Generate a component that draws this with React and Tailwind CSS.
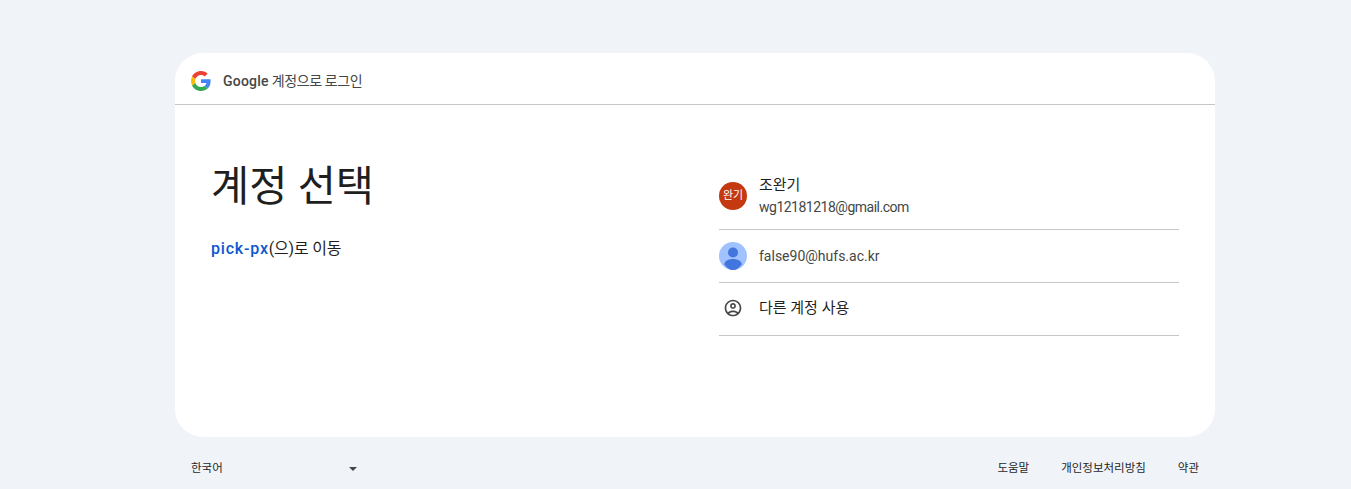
const font = "[font-family:Roboto,'Noto_Sans_CJK_KR',sans-serif]";

const GoogleLogo = () => (
  <svg viewBox="0 0 48 48" className="w-5 h-5 shrink-0 mt-[5px]">
    <path fill="#EA4335" d="M24 9.5c3.54 0 6.71 1.22 9.21 3.6l6.85-6.85C35.9 2.38 30.47 0 24 0 14.62 0 6.51 5.38 2.56 13.22l7.98 6.19C12.43 13.72 17.74 9.5 24 9.5z" />
    <path fill="#4285F4" d="M46.98 24.55c0-1.57-.15-3.09-.38-4.55H24v9.02h12.94c-.58 2.96-2.26 5.48-4.78 7.18l7.73 6c4.51-4.18 7.09-10.36 7.09-17.65z" />
    <path fill="#FBBC05" d="M10.53 28.59c-.48-1.45-.76-2.99-.76-4.59s.27-3.14.76-4.59l-7.98-6.19C.92 16.46 0 20.12 0 24c0 3.88.92 7.54 2.56 10.78l7.97-6.19z" />
    <path fill="#34A853" d="M24 48c6.48 0 11.93-2.13 15.89-5.81l-7.73-6c-2.15 1.45-4.92 2.3-8.16 2.3-6.26 0-11.57-4.22-13.47-9.91l-7.98 6.19C6.51 42.62 14.62 48 24 48z" />
  </svg>
);

const DefaultAvatar = () => (
  <svg viewBox="0 0 28 28" className="w-7 h-7 shrink-0">
    <circle cx="14" cy="14" r="14" fill="#a0c3ff" />
    <circle cx="14" cy="10.5" r="5" fill="#4375de" />
    <path fill="#4375de" d="M14 17c-5 0-8.6 2.2-8.6 5.2C7.6 25.8 10.6 28 14 28s6.4-2.2 8.6-5.8C22.6 19.2 19 17 14 17z" />
  </svg>
);

const UserCircle = () => (
  <svg viewBox="0 0 24 24" className="w-5 h-5" fill="#444746">
    <path d="M12 2C6.48 2 2 6.48 2 12s4.48 10 10 10 10-4.48 10-10S17.52 2 12 2zM7.35 18.5C8.66 17.56 10.26 17 12 17s3.34.56 4.65 1.5C15.34 19.44 13.74 20 12 20s-3.34-.56-4.65-1.5zm10.79-1.38C16.45 15.8 14.32 15 12 15s-4.45.8-6.14 2.12C4.7 15.73 4 13.95 4 12c0-4.42 3.58-8 8-8s8 3.58 8 8c0 1.95-.7 3.73-1.86 5.12z" />
    <path d="M12 6c-1.93 0-3.5 1.57-3.5 3.5S10.07 13 12 13s3.5-1.57 3.5-3.5S13.93 6 12 6zm0 5c-.83 0-1.5-.67-1.5-1.5S11.17 8 12 8s1.5.67 1.5 1.5S12.83 11 12 11z" />
  </svg>
);

const App = () => {
  return (
    <div className={`w-full h-[489px] overflow-hidden bg-[#f0f4f9] ${font} text-[#1f1f1f]`}>
      <div className="w-[1040px] ml-[175px] pt-[53px]">
        <div className="h-[384px] bg-white rounded-[28px]">
          {/* Header */}
          <div className="h-[52px] flex items-center gap-3 pl-4 border-b border-[#c4c7c5]">
            <GoogleLogo />
            <span className="text-sm text-[#444746] pt-[4px] tracking-[-0.4px]">
              <span className="font-medium tracking-[0.2px]">Google</span> 계정으로 로그인
            </span>
          </div>

          <div className="flex px-9 pt-[52px]">
            <div className="w-[508px]">
              <h1 className="text-[41.5px] leading-[60px] font-normal">계정 선택</h1>
              <p className="mt-[20px] text-base leading-6 tracking-[-0.2px]">
                <span className="text-[#0b57d0] font-medium tracking-[0.8px]">pick-px</span>(으)로 이동
              </p>
            </div>

            <div className="w-[460px] mt-[8px]">
              <div className="h-[65px] pb-[2px] flex items-center gap-3 border-b border-[#c4c7c5]">
                <div className="w-7 h-7 rounded-full bg-[#c4390f] text-white text-[11px] flex items-center justify-center shrink-0">완기</div>
                <div>
                  <div className="text-[15px] leading-5">조완기</div>
                  <div className="text-sm leading-5 mt-[2px] text-[#444746] tracking-[-0.5px]">wg12181218@gmail.com</div>
                </div>
              </div>
              <div className="h-[53px] flex items-center gap-3 border-b border-[#c4c7c5]">
                <DefaultAvatar />
                <div className="text-sm text-[#444746]">false90@hufs.ac.kr</div>
              </div>
              <div className="h-[53px] pb-[2px] flex items-center gap-3 border-b border-[#c4c7c5]">
                <div className="w-7 flex justify-center"><UserCircle /></div>
                <div className="text-[15px]">다른 계정 사용</div>
              </div>
            </div>
          </div>
        </div>

        {/* Footer */}
        <div className="flex items-center justify-between h-[62px] pt-[2px] text-[11.5px] text-[#1f1f1f]">
          <div className="w-[182px] flex items-center justify-between pl-4">
            <span>한국어</span>
            <span className="w-0 h-0 border-x-[4.5px] border-x-transparent border-t-[4.5px] border-t-[#444746]" />
          </div>
          <div className="flex items-center gap-8 pr-4">
            <span>도움말</span>
            <span>개인정보처리방침</span>
            <span>약관</span>
          </div>
        </div>
      </div>
    </div>
  );
};

export default App;
